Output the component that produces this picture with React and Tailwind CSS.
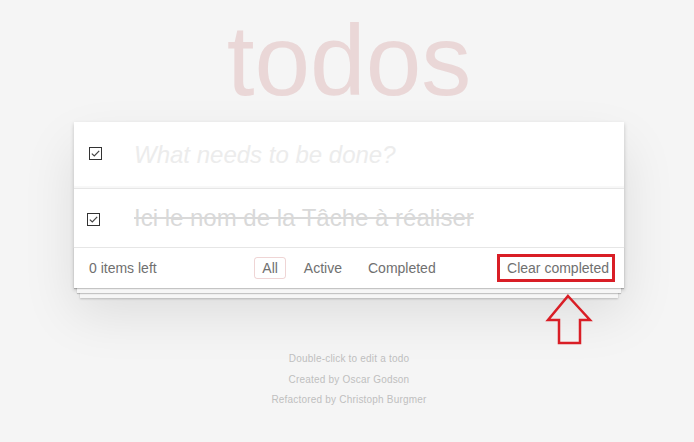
const CheckIcon = () => (
  <svg width="13" height="13" viewBox="0 0 13 13" className="block">
    <rect x="0.5" y="0.5" width="12" height="12" fill="#fff" stroke="#333" strokeWidth="1" />
    <path d="M2.8 6.6 L5.3 9 L10.2 3.8" fill="none" stroke="#444" strokeWidth="1.2" />
  </svg>
);

export default function App() {
  return (
    <div className="relative min-h-[442px] w-full bg-[#f5f5f5] pl-[4px] font-['Liberation_Sans',Arial,sans-serif] text-[14px] text-[#4d4d4d]">
      <h1 className="pt-[10px] text-center text-[100px] leading-[100px] text-[rgba(175,47,47,0.15)]">todos</h1>

      <section className="mx-auto mt-[12px] w-[550px] bg-white shadow-[0_2px_4px_0_rgba(0,0,0,0.2),0_25px_50px_0_rgba(0,0,0,0.1)]">
        {/* new todo */}
        <div className="flex shadow-[inset_0_-2px_1px_rgba(0,0,0,0.03)]">
          <div className="w-[60px] shrink-0 pl-[15px] pt-[25px]">
            <CheckIcon />
          </div>
          <input
            className="min-w-0 flex-1 bg-transparent py-[16px] pr-[16px] text-[24px] leading-[33.6px] outline-none placeholder:italic placeholder:text-[#ececec]"
            placeholder="What needs to be done?"
          />
        </div>

        {/* list */}
        <ul className="border-t border-[#e6e6e6]">
          <li className="flex">
            <div className="w-[60px] shrink-0 pl-[13px] pt-[24px]">
              <CheckIcon />
            </div>
            <label className="flex-1 py-[15px] pr-[15px] text-[24px] leading-[28.8px] text-[#d9d9d9] line-through">
              Ici le nom de la Tâche à réaliser
            </label>
          </li>
        </ul>

        {/* footer */}
        <footer className="grid h-[41px] grid-cols-[minmax(0,1fr)_auto_minmax(0,1fr)] items-center border-t border-[#e6e6e6] px-[15px] text-[#707070] shadow-[0_1px_1px_rgba(0,0,0,0.2),0_8px_0_-3px_#f6f6f6,0_9px_1px_-3px_rgba(0,0,0,0.2),0_16px_0_-6px_#f6f6f6,0_17px_2px_-6px_rgba(0,0,0,0.2)]">
          <span className="leading-[20px]">0 items left</span>
          <ul className="flex gap-[10px]">
            <li className="rounded-[3px] border border-[rgba(175,47,47,0.2)] px-[7px] py-[3px] leading-[14px]">All</li>
            <li className="rounded-[3px] border border-transparent px-[7px] py-[3px] leading-[14px]">Active</li>
            <li className="rounded-[3px] border border-transparent px-[7px] py-[3px] leading-[14px]">Completed</li>
          </ul>
          <span className="relative justify-self-end leading-[20px]">
            Clear completed
            <span className="absolute -top-[4px] -bottom-[4px] -left-[10px] -right-[6px] border-[3px] border-[#d91e26]" />
          </span>
        </footer>
      </section>

      <svg className="absolute left-[545px] top-[293px]" width="48" height="54" viewBox="0 0 48 54">
        <polygon
          points="23,3 45,27 35,27 35,50 14,50 14,27 3,27"
          fill="none"
          stroke="#d91e26"
          strokeWidth="2.5"
          strokeLinejoin="miter"
        />
      </svg>

      <div className="mt-[61px] flex flex-col text-center text-[10px] leading-[20.5px] tracking-[0.2px] text-[#bfbfbf]">
        <p>Double-click to edit a todo</p>
        <p>Created by Oscar Godson</p>
        <p>Refactored by Christoph Burgmer</p>
      </div>
    </div>
  );
}
